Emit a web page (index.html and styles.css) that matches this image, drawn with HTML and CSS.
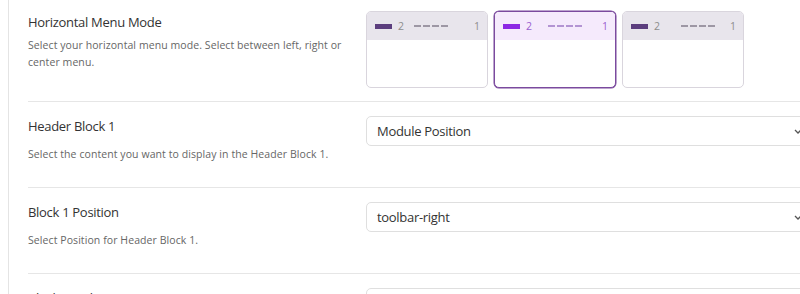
FILE: index.html
```html
<!DOCTYPE html>
<html lang="en">
<head>
    <meta charset="UTF-8">
    <meta name="viewport" content="width=device-width, initial-scale=1.0">
    <title>Header Options</title>
    <link rel="stylesheet" href="styles.css">
</head>
<body>
    <div class="panel">
        <div class="row row-first">
            <div class="row-label">
                <h3 class="title">Horizontal Menu Mode</h3>
                <p class="desc">Select your horizontal menu mode. Select between left, right or center menu.</p>
            </div>
            <div class="modes">
                <div class="mode">
                    <div class="mode-head">
                        <span class="bar"></span>
                        <span class="num">2</span>
                        <span class="dash-area left"><span class="dash"></span></span>
                        <span class="num">1</span>
                    </div>
                </div>
                <div class="mode active">
                    <div class="mode-head">
                        <span class="bar"></span>
                        <span class="num">2</span>
                        <span class="dash-area center"><span class="dash"></span></span>
                        <span class="num">1</span>
                    </div>
                </div>
                <div class="mode">
                    <div class="mode-head">
                        <span class="bar"></span>
                        <span class="num">2</span>
                        <span class="dash-area right"><span class="dash"></span></span>
                        <span class="num">1</span>
                    </div>
                </div>
            </div>
        </div>

        <div class="row">
            <div class="row-label">
                <h3 class="title">Header Block 1</h3>
                <p class="desc">Select the content you want to display in the Header Block 1.</p>
            </div>
            <div class="select">
                <span>Module Position</span>
                <svg class="chevron" width="8" height="5" viewBox="0 0 8 5"><path d="M1 1l3 3 3-3" fill="none" stroke="#555" stroke-width="1.3"/></svg>
            </div>
        </div>

        <div class="row">
            <div class="row-label">
                <h3 class="title">Block 1 Position</h3>
                <p class="desc">Select Position for Header Block 1.</p>
            </div>
            <div class="select">
                <span>toolbar-right</span>
                <svg class="chevron" width="8" height="5" viewBox="0 0 8 5"><path d="M1 1l3 3 3-3" fill="none" stroke="#555" stroke-width="1.3"/></svg>
            </div>
        </div>

        <div class="row">
            <div class="row-label">
                <h3 class="title">Block 1 Style</h3>
                <p class="desc">Select the style for Header Block 1.</p>
            </div>
            <div class="select">
                <span>Default</span>
                <svg class="chevron" width="8" height="5" viewBox="0 0 8 5"><path d="M1 1l3 3 3-3" fill="none" stroke="#555" stroke-width="1.3"/></svg>
            </div>
        </div>
    </div>
</body>
</html>
```

FILE: styles.css
```css
body {
    margin: 0;
    font-family: 'Open Sans', 'Noto Sans', sans-serif;
    background-color: #fff;
    color: #333;
    overflow: hidden;
}
.panel {
    margin-left: 8px;
    border-left: 1px solid #e4e4e4;
    padding-left: 19px;
    width: 800px;
    min-height: 100vh;
}
.row {
    display: grid;
    grid-template-columns: 338px 449px;
    padding: 14px 0 15px;
    border-bottom: 1px solid #e6e6e6;
}
.row-first {
    padding: 11px 0 13px;
}
.row-label {
    padding-top: 0;
}
.row-first .row-label {
    padding-top: 1px;
}
.title {
    margin: 0;
    font-size: 13px;
    font-weight: 400;
    line-height: 20px;
    letter-spacing: -0.3px;
    color: #333;
}
.desc {
    margin: 10px 0 9px;
    font-size: 10.5px;
    line-height: 17px;
    letter-spacing: 0.08px;
    color: #666;
    max-width: 320px;
}
.row-first .desc {
    margin-top: 5px;
}

/* menu mode cards */
.modes {
    display: flex;
    gap: 6px;
}
.mode {
    width: 122px;
    height: 77px;
    box-sizing: border-box;
    border: 1px solid #d9d5dd;
    border-radius: 5px;
    overflow: hidden;
    background-color: #fff;
}
.mode-head {
    display: flex;
    align-items: center;
    height: 28px;
    padding: 0 7px 0 8px;
    background-color: #e8e5ec;
}
.bar {
    width: 17px;
    height: 5px;
    background-color: #5c3e7e;
}
.num {
    font-size: 10.5px;
    color: #8d8d8d;
    margin-left: 6px;
}
.dash-area {
    flex: 1;
    display: flex;
    padding: 0 9px 0 10px;
}
.dash-area.center {
    justify-content: center;
}
.dash-area.right {
    justify-content: flex-end;
}
.dash {
    width: 34px;
    height: 1.6px;
    background: repeating-linear-gradient(90deg, #9d97a4 0 6.5px, transparent 6.5px 9px);
}
.mode.active {
    border-color: #7b4a9e;
    box-shadow: 0 0 0 0.5px #7b4a9e;
}
.mode.active .mode-head {
    background-color: #f5eafc;
}
.mode.active .bar {
    background-color: #8d28e4;
}
.mode.active .num {
    color: #9a5fcf;
}
.mode.active .dash {
    background: repeating-linear-gradient(90deg, #b394d3 0 6.5px, transparent 6.5px 9px);
}

/* select boxes */
.select {
    display: flex;
    align-items: center;
    justify-content: space-between;
    height: 30px;
    box-sizing: border-box;
    border: 1px solid #dfdfdf;
    border-radius: 5px;
    padding: 0 12px 0 10px;
    font-size: 13px;
    letter-spacing: -0.3px;
    color: #333;
}
.chevron {
    flex-shrink: 0;
}
```
